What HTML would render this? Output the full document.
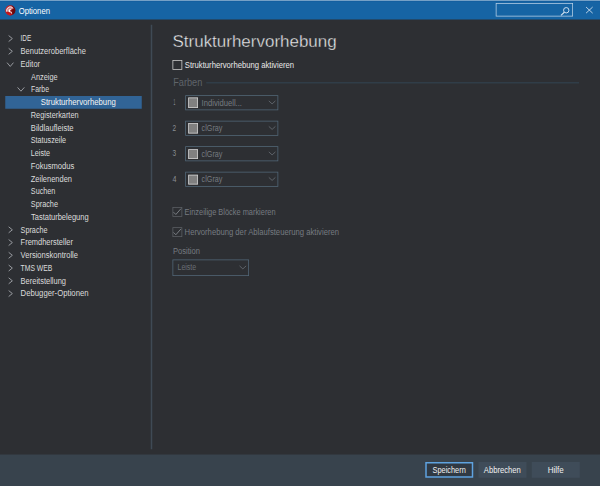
<!DOCTYPE html>
<html lang="de">
<head>
<meta charset="utf-8">
<title>Optionen</title>
<style>
html,body{margin:0;padding:0;background:#2d2f33;overflow:hidden;}
body{width:600px;height:486px;position:relative;font-family:"Liberation Sans",sans-serif;}
#w{position:absolute;left:0;top:0;width:800px;height:648px;transform:scale(0.75);transform-origin:0 0;background:#2d2f33;overflow:hidden;}
#w div,#w svg,#w h1,#w span{position:absolute;box-sizing:border-box;white-space:nowrap;margin:0;}
#tb{left:0;top:0;width:800px;height:26px;background:#1664a4;}
#tbl{left:0;top:0;width:800px;height:1px;background:#c2d3e5;}
#tbl2{left:0;top:1px;width:800px;height:1px;background:#115b9b;}
#srch{left:661.33px;top:4.0px;width:102.67px;height:18.27px;border:1.2px solid #b9d0e6;}
#bar{left:0;top:606.27px;width:800px;height:42.67px;background:#38434d;}
.btn{top:616.27px;height:21.07px;width:64.0px;background:#3f4c59;}
#split{left:201.33px;top:33.33px;width:1.33px;height:566.13px;background:#3f4a55;}
#sel{left:6.93px;top:128.27px;width:182.13px;height:16.27px;background:#316496;}
.cmb{left:246.67px;width:124.0px;height:20.0px;border:1.33px solid #53697a;}
.sw{left:250.67px;width:13.33px;height:13.6px;background:#808080;border:1.07px solid #d0d0d0;}
.cb{left:229.73px;width:13.07px;height:12.93px;border:1.2px solid #5c6066;}
.ln{left:275.33px;top:109.6px;width:496.67px;height:1.2px;background:#344d5e;}
svg{overflow:visible}
</style>
</head>
<body>
<div id="w">
<div id="tb"></div><div id="tbl"></div><div id="tbl2"></div>
<svg style="left:6.93px;top:6.53px" width="13.6" height="13.87" viewBox="0 0 16 16"><defs><linearGradient id="ig" x1="0" y1="0.25" x2="1" y2="0.55"><stop offset="0" stop-color="#d42328"/><stop offset="0.5" stop-color="#a81015"/><stop offset="0.8" stop-color="#6a090c"/><stop offset="1" stop-color="#6a090c"/></linearGradient><radialGradient id="ig2" cx="0.42" cy="0.98" r="0.42"><stop offset="0" stop-color="#e3161c"/><stop offset="1" stop-color="#e3161c" stop-opacity="0"/></radialGradient></defs><circle cx="8" cy="8" r="8" fill="url(#ig)"/><circle cx="8" cy="8" r="8" fill="url(#ig2)"/><path d="M1.5 9.6 C1 4.8 4.6 1.4 8.6 1.7 C10.4 1.9 11.8 3 12.3 4.3 L11.2 5.9 C9.2 4.7 5.9 5.2 5.2 7.6 C4.9 9 5.4 10 6.4 10.5 Z" fill="#d98d90"/><path d="M1.9 9.2 C1.6 5 4.9 1.9 8.6 2.2 C10.2 2.4 11.4 3.2 12 4.3" fill="none" stroke="#ffffff" stroke-width="1.15" stroke-linecap="round"/><path d="M11.3 5.8 C9.2 4.6 5.8 5.1 5.1 7.6 C4.6 9.6 6 10.7 8 10.9 L10.9 13.9 L9.9 10.2 C8.4 10 7.5 9.2 7.7 8 C8 6.9 9.6 6.5 11.3 5.8 Z" fill="#ffffff"/></svg>
<div id="srch"></div>
<svg style="left:747.33px;top:8.67px" width="13.33" height="12.0" viewBox="0 0 10 9"><circle cx="6" cy="3.5" r="2.7" fill="none" stroke="#d5e4f2" stroke-width="0.95"/><path d="M4.1 5.5 L0.7 8.6" stroke="#d5e4f2" stroke-width="1.1"/></svg>
<svg style="left:781.47px;top:9.33px" width="9.6" height="8.93" viewBox="0 0 7.2 6.7"><path d="M0.3 0.3 L6.9 6.4 M6.9 0.3 L0.3 6.4" stroke="#d6e3f0" stroke-width="0.85" fill="none"/></svg>
<div id="sel"></div>
<svg style="left:10.8px;top:47.2px" width="6.27" height="8.8" viewBox="0 0 4.7 6.6"><path d="M0.4 0.3 L4.1 3.3 L0.4 6.3" fill="none" stroke="#979a9f" stroke-width="1"/></svg>
<svg style="left:10.8px;top:64.2px" width="6.27" height="8.8" viewBox="0 0 4.7 6.6"><path d="M0.4 0.3 L4.1 3.3 L0.4 6.3" fill="none" stroke="#979a9f" stroke-width="1"/></svg>
<svg style="left:10.8px;top:302.2px" width="6.27" height="8.8" viewBox="0 0 4.7 6.6"><path d="M0.4 0.3 L4.1 3.3 L0.4 6.3" fill="none" stroke="#979a9f" stroke-width="1"/></svg>
<svg style="left:10.8px;top:319.2px" width="6.27" height="8.8" viewBox="0 0 4.7 6.6"><path d="M0.4 0.3 L4.1 3.3 L0.4 6.3" fill="none" stroke="#979a9f" stroke-width="1"/></svg>
<svg style="left:10.8px;top:336.2px" width="6.27" height="8.8" viewBox="0 0 4.7 6.6"><path d="M0.4 0.3 L4.1 3.3 L0.4 6.3" fill="none" stroke="#979a9f" stroke-width="1"/></svg>
<svg style="left:10.8px;top:353.2px" width="6.27" height="8.8" viewBox="0 0 4.7 6.6"><path d="M0.4 0.3 L4.1 3.3 L0.4 6.3" fill="none" stroke="#979a9f" stroke-width="1"/></svg>
<svg style="left:10.8px;top:370.2px" width="6.27" height="8.8" viewBox="0 0 4.7 6.6"><path d="M0.4 0.3 L4.1 3.3 L0.4 6.3" fill="none" stroke="#979a9f" stroke-width="1"/></svg>
<svg style="left:10.8px;top:387.2px" width="6.27" height="8.8" viewBox="0 0 4.7 6.6"><path d="M0.4 0.3 L4.1 3.3 L0.4 6.3" fill="none" stroke="#979a9f" stroke-width="1"/></svg>
<svg style="left:9.47px;top:82.53px" width="9.33" height="6.13" viewBox="0 0 7 4.6"><path d="M0.3 0.4 L3.5 4.199999999999999 L6.7 0.4" fill="none" stroke="#979a9f" stroke-width="1"/></svg>
<svg style="left:22.8px;top:116.13px" width="9.87" height="6.13" viewBox="0 0 7.4 4.6"><path d="M0.3 0.4 L3.7 4.199999999999999 L7.1000000000000005 0.4" fill="none" stroke="#979a9f" stroke-width="1"/></svg>
<div id="split"></div>
<div class="ln"></div>
<div class="cb" style="top:80.13px;height:13.07px;border-color:#d2d2d2"></div>
<div class="cb" style="top:276.4px"></div>
<svg style="left:231.47px;top:278.27px" width="10.67" height="8.53" viewBox="0 0 8 6.4"><path d="M0.3 3.7 L2.6 6 L7.7 0.2" fill="none" stroke="#868b91" stroke-width="0.85"/></svg>
<div class="cb" style="top:302.87px"></div>
<svg style="left:231.47px;top:304.73px" width="10.67" height="8.53" viewBox="0 0 8 6.4"><path d="M0.3 3.7 L2.6 6 L7.7 0.2" fill="none" stroke="#868b91" stroke-width="0.85"/></svg>
<div class="cmb" style="top:127.2px"></div>
<div class="sw" style="top:130.4px"></div>
<svg style="left:357.6px;top:133.87px" width="9.6" height="5.07" viewBox="0 0 7.2 3.8"><path d="M0.3 0.4 L3.6 3.4 L6.9 0.4" fill="none" stroke="#666b72" stroke-width="0.85"/></svg>
<div class="cmb" style="top:161.27px"></div>
<div class="sw" style="top:164.47px"></div>
<svg style="left:357.6px;top:167.93px" width="9.6" height="5.07" viewBox="0 0 7.2 3.8"><path d="M0.3 0.4 L3.6 3.4 L6.9 0.4" fill="none" stroke="#666b72" stroke-width="0.85"/></svg>
<div class="cmb" style="top:195.33px"></div>
<div class="sw" style="top:198.53px"></div>
<svg style="left:357.6px;top:202.0px" width="9.6" height="5.07" viewBox="0 0 7.2 3.8"><path d="M0.3 0.4 L3.6 3.4 L6.9 0.4" fill="none" stroke="#666b72" stroke-width="0.85"/></svg>
<div class="cmb" style="top:229.4px"></div>
<div class="sw" style="top:232.6px"></div>
<svg style="left:357.6px;top:236.07px" width="9.6" height="5.07" viewBox="0 0 7.2 3.8"><path d="M0.3 0.4 L3.6 3.4 L6.9 0.4" fill="none" stroke="#666b72" stroke-width="0.85"/></svg>
<div class="cmb" style="left:229.6px;top:345.73px;width:102.13px;height:22.0px"></div>
<svg style="left:318.93px;top:353.73px" width="9.6" height="5.07" viewBox="0 0 7.2 3.8"><path d="M0.3 0.4 L3.6 3.4 L6.9 0.4" fill="none" stroke="#666b72" stroke-width="0.85"/></svg>
<div id="bar"></div>
<div class="btn" style="left:567.33px;background:#303943;border:2.13px solid #5fa3e0"></div>
<div class="btn" style="left:638.27px;width:63.47px"></div>
<div class="btn" style="left:708.93px"></div>
<svg id="txt" style="left:0;top:0" width="800" height="648" viewBox="0 0 800 648" font-family="Liberation Sans, sans-serif">
<text x="24.93" y="18.27" font-size="11.27" fill="#ffffff" textLength="41.73" lengthAdjust="spacingAndGlyphs">Optionen</text>
<text x="27.33" y="55.2" font-size="11.27" fill="#dcdcdc" textLength="14.40" lengthAdjust="spacingAndGlyphs">IDE</text>
<text x="27.47" y="72.2" font-size="11.27" fill="#dcdcdc" textLength="87.20" lengthAdjust="spacingAndGlyphs">Benutzeroberfläche</text>
<text x="27.47" y="89.2" font-size="11.27" fill="#dcdcdc" textLength="25.87" lengthAdjust="spacingAndGlyphs">Editor</text>
<text x="41.33" y="106.2" font-size="11.27" fill="#dcdcdc" textLength="35.47" lengthAdjust="spacingAndGlyphs">Anzeige</text>
<text x="41.33" y="123.2" font-size="11.27" fill="#dcdcdc" textLength="24.00" lengthAdjust="spacingAndGlyphs">Farbe</text>
<text x="54.4" y="140.2" font-size="11.27" fill="#f4f4f4" textLength="100.00" lengthAdjust="spacingAndGlyphs">Strukturhervorhebung</text>
<text x="41.07" y="157.2" font-size="11.27" fill="#dcdcdc" textLength="63.73" lengthAdjust="spacingAndGlyphs">Registerkarten</text>
<text x="41.07" y="174.2" font-size="11.27" fill="#dcdcdc" textLength="57.07" lengthAdjust="spacingAndGlyphs">Bildlaufleiste</text>
<text x="41.07" y="191.2" font-size="11.27" fill="#dcdcdc" textLength="46.93" lengthAdjust="spacingAndGlyphs">Statuszeile</text>
<text x="41.07" y="208.2" font-size="11.27" fill="#dcdcdc" textLength="25.60" lengthAdjust="spacingAndGlyphs">Leiste</text>
<text x="41.07" y="225.2" font-size="11.27" fill="#dcdcdc" textLength="58.13" lengthAdjust="spacingAndGlyphs">Fokusmodus</text>
<text x="41.07" y="242.2" font-size="11.27" fill="#dcdcdc" textLength="54.93" lengthAdjust="spacingAndGlyphs">Zeilenenden</text>
<text x="41.07" y="259.2" font-size="11.27" fill="#dcdcdc" textLength="32.80" lengthAdjust="spacingAndGlyphs">Suchen</text>
<text x="41.07" y="276.2" font-size="11.27" fill="#dcdcdc" textLength="36.27" lengthAdjust="spacingAndGlyphs">Sprache</text>
<text x="41.33" y="293.2" font-size="11.27" fill="#dcdcdc" textLength="76.80" lengthAdjust="spacingAndGlyphs">Tastaturbelegung</text>
<text x="27.47" y="310.2" font-size="11.27" fill="#dcdcdc" textLength="36.00" lengthAdjust="spacingAndGlyphs">Sprache</text>
<text x="27.47" y="327.2" font-size="11.27" fill="#dcdcdc" textLength="69.87" lengthAdjust="spacingAndGlyphs">Fremdhersteller</text>
<text x="27.47" y="344.2" font-size="11.27" fill="#dcdcdc" textLength="76.53" lengthAdjust="spacingAndGlyphs">Versionskontrolle</text>
<text x="27.47" y="361.2" font-size="11.27" fill="#dcdcdc" textLength="42.40" lengthAdjust="spacingAndGlyphs">TMS WEB</text>
<text x="27.47" y="378.2" font-size="11.27" fill="#dcdcdc" textLength="60.53" lengthAdjust="spacingAndGlyphs">Bereitstellung</text>
<text x="27.47" y="395.2" font-size="11.27" fill="#dcdcdc" textLength="90.67" lengthAdjust="spacingAndGlyphs">Debugger-Optionen</text>
<text x="230.0" y="62.53" font-size="22.40" fill="#f0f0f0" stroke="#2d2f33" stroke-width="0.5" textLength="218.93" lengthAdjust="spacingAndGlyphs">Strukturhervorhebung</text>
<text x="246.4" y="90.93" font-size="11.27" fill="#e8e8e8" textLength="145.60" lengthAdjust="spacingAndGlyphs">Strukturhervorhebung aktivieren</text>
<text x="230.93" y="114.27" font-size="14.33" fill="#5f646a" textLength="38.80" lengthAdjust="spacingAndGlyphs">Farben</text>
<text x="231.2" y="140.27" font-size="11.27" fill="#8a8e94" textLength="2.40" lengthAdjust="spacingAndGlyphs">1</text>
<text x="230.13" y="174.33" font-size="11.27" fill="#8a8e94" textLength="4.80" lengthAdjust="spacingAndGlyphs">2</text>
<text x="230.13" y="208.4" font-size="11.27" fill="#8a8e94" textLength="4.80" lengthAdjust="spacingAndGlyphs">3</text>
<text x="229.87" y="242.47" font-size="11.27" fill="#8a8e94" textLength="5.33" lengthAdjust="spacingAndGlyphs">4</text>
<text x="268.8" y="140.93" font-size="11.27" fill="#767b81" textLength="53.87" lengthAdjust="spacingAndGlyphs">Individuell...</text>
<text x="268.8" y="175.0" font-size="11.27" fill="#767b81" textLength="27.73" lengthAdjust="spacingAndGlyphs">clGray</text>
<text x="268.8" y="209.07" font-size="11.27" fill="#767b81" textLength="27.73" lengthAdjust="spacingAndGlyphs">clGray</text>
<text x="268.8" y="243.13" font-size="11.27" fill="#767b81" textLength="27.73" lengthAdjust="spacingAndGlyphs">clGray</text>
<text x="246.13" y="287.07" font-size="11.27" fill="#767b81" textLength="121.33" lengthAdjust="spacingAndGlyphs">Einzeilige Blöcke markieren</text>
<text x="246.13" y="313.73" font-size="11.27" fill="#767b81" textLength="205.87" lengthAdjust="spacingAndGlyphs">Hervorhebung der Ablaufsteuerung aktivieren</text>
<text x="230.67" y="338.13" font-size="11.27" fill="#767b81" textLength="36.00" lengthAdjust="spacingAndGlyphs">Position</text>
<text x="236.67" y="360.53" font-size="11.27" fill="#696e74" textLength="24.93" lengthAdjust="spacingAndGlyphs">Leiste</text>
<text x="576.67" y="631.07" font-size="11.27" fill="#f0f0f0" textLength="44.40" lengthAdjust="spacingAndGlyphs">Speichern</text>
<text x="645.07" y="631.07" font-size="11.27" fill="#f0f0f0" textLength="49.33" lengthAdjust="spacingAndGlyphs">Abbrechen</text>
<text x="730.4" y="631.07" font-size="11.27" fill="#f0f0f0" textLength="21.33" lengthAdjust="spacingAndGlyphs">Hilfe</text>
</svg>
</div>
</body>
</html>
